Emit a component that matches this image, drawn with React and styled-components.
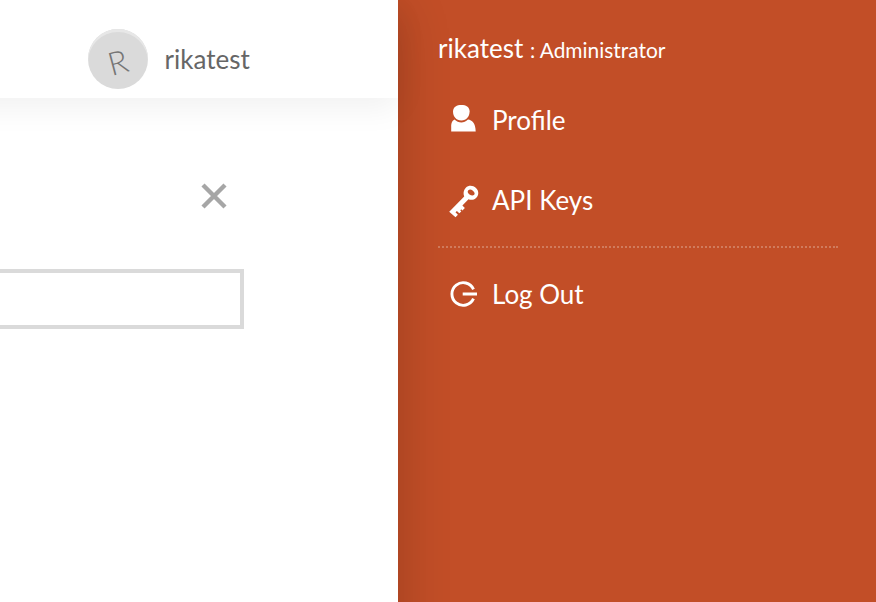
import React from "react";
import styled, { createGlobalStyle } from "styled-components";

const GlobalStyle = createGlobalStyle`
  * { box-sizing: border-box; }
  body { margin: 0; background: #fff; font-family: Lato, sans-serif; overflow: hidden; }
`;

const Page = styled.div`
  display: grid;
  grid-template-columns: 398px 1fr;
  grid-template-rows: 760px;
  height: 602px;
  overflow: hidden;
`;

const Main = styled.main`
  z-index: 1;
  background: #fff;
  box-shadow: 0 10px 50px rgba(0, 0, 0, 0.19);
`;

const Header = styled.header`
  display: flex;
  align-items: flex-start;
  gap: 17px;
  height: 98px;
  margin-left: -60px;
  padding: 29px 0 0 148px;
  box-shadow: 0 10px 30px rgba(0, 0, 0, 0.06);
`;

const Avatar = styled.div`
  display: grid;
  place-items: center;
  width: 60px;
  height: 60px;
  border-radius: 50%;
  background: #dadada;
  box-shadow: inset 0 3px 0 #e7e7e7;
`;

const Initial = styled.span`
  color: #757575;
  font-size: 32px;
  font-weight: 300;
  line-height: 32px;
  margin-top: 6px;
  transform: rotate(-15deg);
`;

const UserName = styled.span`
  color: #666;
  font-size: 26px;
  line-height: 32px;
  margin: 14px 0 0 -0.5px;
`;

const Content = styled.section`
  display: flex;
  flex-direction: column;
  align-items: flex-start;
`;

const CloseButton = styled.button`
  margin: 85px 0 0 201px;
  padding: 0;
  border: 0;
  background: none;
  height: 26px;
  line-height: 0;
`;

const Field = styled.input`
  width: 264px;
  height: 60px;
  margin: 60px 0 0 -20px;
  border: 4px solid #dadada;
  border-radius: 0;
  background: #fff;
  outline: none;
`;

const Drawer = styled.aside`
  padding: 32px 38px 0 40px;
  background: #c24e27;
  color: #fff;
`;

const Account = styled.div`
  height: 32px;
  font-size: 26px;
  line-height: 32px;
  white-space: pre;
`;

const Role = styled.span`
  font-size: 20.9px;
  line-height: 1;
`;

const Menu = styled.nav`
  display: flex;
  flex-direction: column;
  margin-top: 17px;
`;

const MenuItem = styled.a`
  display: flex;
  align-items: center;
  gap: 12px;
  height: 80px;
  padding-left: 10px;
  font-size: 26px;
  line-height: 32px;
`;

const Label = styled.span`
  margin-bottom: 2px;
`;

const Glyph = styled.svg`
  width: 32px;
  height: 40px;
  flex: none;
`;

const Divider = styled.div`
  width: 400px;
  height: 2px;
  margin: 5px 0 7px;
  background:
    linear-gradient(#d07b5d, #d07b5d) 100% 0 / 2px 2px no-repeat,
    repeating-linear-gradient(90deg, #d07b5d 0 2px, transparent 2px 3.988px) 0 0 / 397px 2px no-repeat;
`;

export default function App() {
  return (
    <Page>
      <GlobalStyle />
      <Main>
        <Header>
          <Avatar><Initial>R</Initial></Avatar>
          <UserName>rikatest</UserName>
        </Header>
        <Content>
          <CloseButton aria-label="Close">
            <svg width="26" height="26" viewBox="0 0 26 26">
              <path d="M2 2 24 24M24 2 2 24" stroke="#a6a6a6" strokeWidth="4.4" />
            </svg>
          </CloseButton>
          <Field aria-label="Value" />
        </Content>
      </Main>
      <Drawer>
        <Account>rikatest <Role>: Administrator</Role></Account>
        <Menu>
          <MenuItem>
            <Glyph viewBox="0 0 32 40" fill="#fff">
              <path d="M13.3 4C18 4 21.4 5.500 21.600 10.500C21.600 15.500 18.500 19.400 13.300 19.400S5 15.500 5 10.500C5.200 5.500 9 4 13.300 4Z" />
              <path d="M3.200 30.600V26C3.200 21.500 4.500 19.600 6.500 18.600C8.500 20.600 11 21.500 13.300 21.500S18 20.600 20 18.600C24 19.300 27.500 22 27.700 30.600Z" />
            </Glyph>
            <Label>Profile</Label>
          </MenuItem>
          <MenuItem>
            <Glyph viewBox="0 0 32 40" fill="#fff">
              <path fillRule="evenodd" d="M17.800 6.700C20.600 3.900 25 4.100 28 7S31 14 28.300 16.700C26 19 23 19.300 20.500 18.300L14.400 24.400L16.900 26.900L14.400 29.400L13.200 28.200L12.300 29.400L13.300 30.500L11.300 32.300L8.900 29.900L7.500 31.300L9.900 33.700L7.500 36.200L1.200 30.700L3.200 28.700L16.200 15.600C15 12.500 15.400 9.100 17.800 6.700ZM20.300 9.200C19 10.500 20 12.400 21.500 13.400C23.200 14.600 25 14.900 26.200 13.700S26 10.700 24.600 9.500S21.600 7.900 20.300 9.200Z" />
            </Glyph>
            <Label>API Keys</Label>
          </MenuItem>
          <Divider />
          <MenuItem>
            <Glyph viewBox="0 0 32 40" fill="none" stroke="#fff" strokeWidth="2.9">
              <path d="M25.500 14.300A11.300 11.300 0 1 0 25.500 23.700M14.700 19H29" />
            </Glyph>
            <Label>Log Out</Label>
          </MenuItem>
        </Menu>
      </Drawer>
    </Page>
  );
}
